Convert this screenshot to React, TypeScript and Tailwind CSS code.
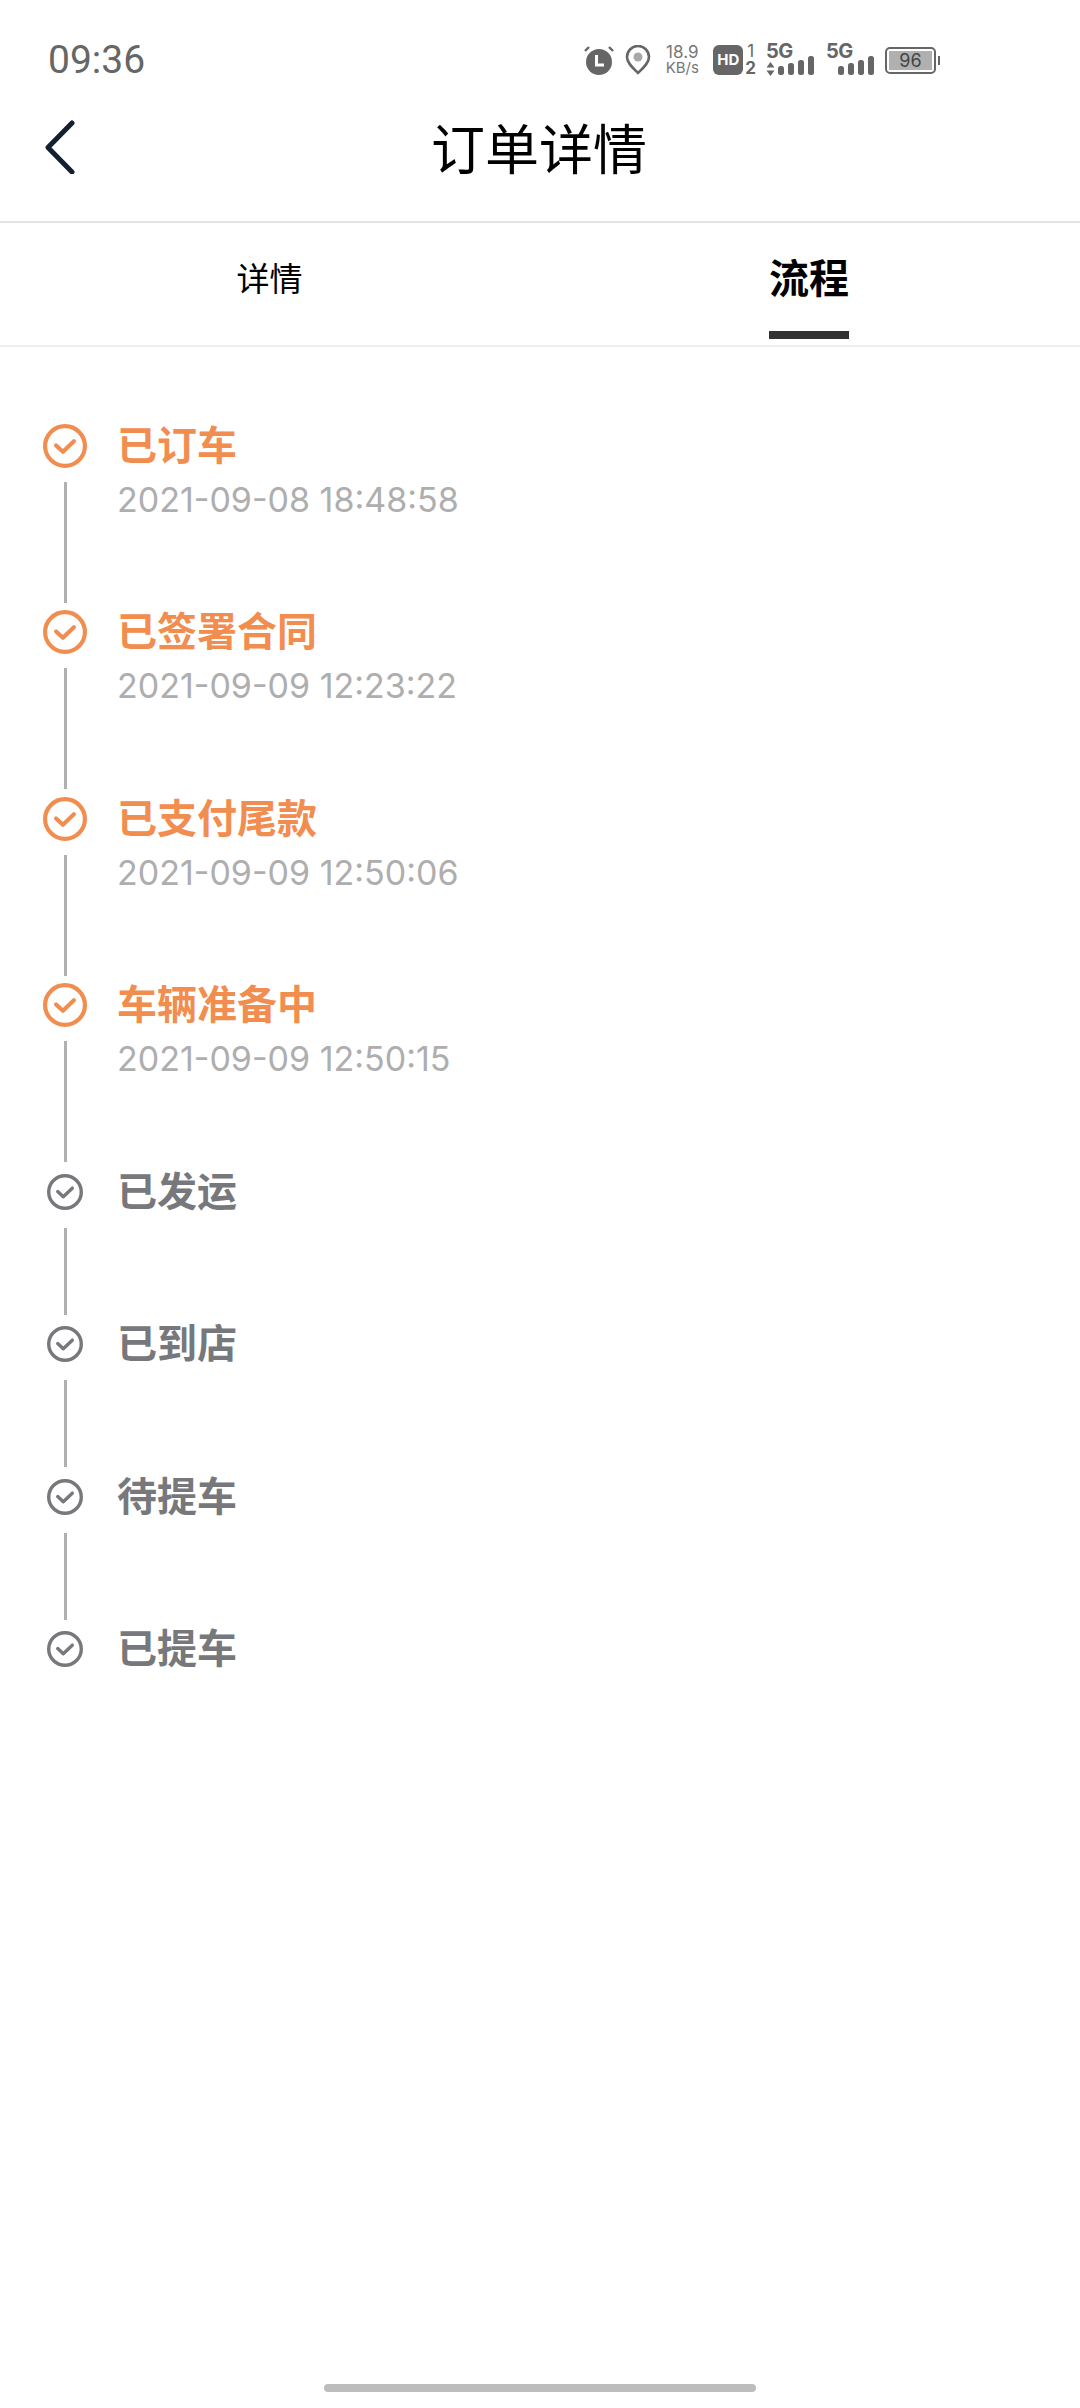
const doneSteps = [
  { title: "已订车", time: "2021-09-08 18:48:58" },
  { title: "已签署合同", time: "2021-09-09 12:23:22" },
  { title: "已支付尾款", time: "2021-09-09 12:50:06" },
  { title: "车辆准备中", time: "2021-09-09 12:50:15" },
]

const pendingSteps = ["已发运", "已到店", "待提车", "已提车"]

const CheckCircle = ({ size, color }: { size: number; color: string }) => (
  <svg width={size} height={size} viewBox="0 0 42 42" fill="none">
    <circle cx="21" cy="21" r="19" stroke={color} strokeWidth="4" />
    <path d="M12.5 20.5 L19 26.5 L29.5 16.5" stroke={color} strokeWidth="4" strokeLinecap="round" strokeLinejoin="round" />
  </svg>
)

const Signal = ({ arrows }: { arrows?: boolean }) => (
  <div className="relative h-[30px] w-[48px]">
    <span className="absolute left-0 top-[-4px] text-[20px] font-bold leading-[20px] tracking-[-0.5px] text-[#666]">5G</span>
    {arrows && (
      <svg className="absolute left-0 top-[17px]" width="9" height="14" viewBox="0 0 9 14" fill="#666">
        <path d="M4.5 0 L8.5 5.5 H0.5 Z M0.5 8.5 H8.5 L4.5 14 Z" />
      </svg>
    )}
    <svg className="absolute left-[12px] top-[11px]" width="36" height="19" viewBox="0 0 36 19" fill="#666">
      <rect x="0" y="10" width="6" height="9" rx="2.5" />
      <rect x="10" y="7" width="6" height="12" rx="2.5" />
      <rect x="20" y="4" width="6" height="15" rx="2.5" />
      <rect x="30" y="0" width="6" height="19" rx="2.5" />
    </svg>
  </div>
)

const StatusBar = () => (
  <div className="flex h-[88px] items-center justify-between pl-[48px] pr-[140px] pt-[32px] text-[#666]">
    <span className="text-[39px] leading-none" style={{ fontFamily: "Roboto, sans-serif" }}>09:36</span>
    <div className="flex items-center">
      <svg width="30" height="30" viewBox="0 0 30 30" fill="#666">
        <circle cx="15" cy="17" r="13" />
        <path d="M12.5 10 V20 H20" fill="none" stroke="#fff" strokeWidth="3" />
        <path d="M1 6 L5 2 M29 6 L25 2" stroke="#666" strokeWidth="2.4" fill="none" />
      </svg>
      <svg className="ml-[11px]" width="26" height="30" viewBox="0 0 26 30" fill="none">
        <path d="M13 28 C8 23 2 18 2 12 A11 11 0 0 1 24 12 C24 18 18 23 13 28 Z" stroke="#666" strokeWidth="2.6" strokeLinejoin="round" />
        <circle cx="13" cy="12" r="4.5" fill="#a8a8a8" />
      </svg>
      <div className="ml-[10px] flex w-[42px] flex-col items-center leading-[15px] text-[#777]">
        <span className="text-[17px]">18.9</span>
        <span className="text-[15px]">KB/s</span>
      </div>
      <div className="ml-[10px] flex h-[30px] w-[30px] items-center justify-center rounded-[6px] bg-[#666] text-[15px] font-bold text-white">
        HD
      </div>
      <div className="ml-[2px] flex flex-col items-center text-[17px] leading-[17px] font-bold text-[#666]">
        <span className="font-normal">1</span>
        <span>2</span>
      </div>
      <div className="ml-[10px]">
        <Signal arrows />
      </div>
      <div className="ml-[12px]">
        <Signal />
      </div>
      <div className="ml-[11px] flex items-center">
        <div className="flex h-[27px] w-[51px] items-center rounded-[5px] border-2 border-[#666] p-[2px]">
          <div className="flex h-full w-[44px] items-center justify-center bg-[#b0b0b0] text-[18px] text-[#444]">96</div>
        </div>
        <div className="ml-[2px] h-[9px] w-[2px] bg-[#666]" />
      </div>
    </div>
  </div>
)

export default function App() {
  return (
    <div
      className="h-[2408px] w-[1080px] overflow-hidden bg-white"
      style={{ fontFamily: '"Inter", "Noto Sans CJK SC", sans-serif' }}
    >
      <StatusBar />

      <div className="relative flex h-[135px] items-center justify-center border-b-2 border-[#e4e4e4] pb-[7px]">
        <svg className="absolute left-[44px] top-[30px]" width="32" height="56" viewBox="0 0 32 56" fill="none">
          <path d="M28 5 L4 29.5 L28 54" stroke="#13202f" strokeWidth="5" strokeLinecap="round" strokeLinejoin="round" />
        </svg>
        <span className="mr-[2px] text-[54px] leading-none text-black">订单详情</span>
      </div>

      <div className="grid h-[124px] grid-cols-2 border-b-2 border-[#eeeeee]">
        <div className="flex justify-center pt-[33px] pr-[1px]">
          <span className="text-[33px] leading-[46px] text-black">详情</span>
        </div>
        <div className="flex justify-center pr-[2px]">
          <div className="flex h-[116px] flex-col items-center justify-between pt-[33px]">
            <span className="text-[40px] leading-[46px] font-bold text-black">流程</span>
            <div className="h-[8px] w-[80px] bg-[#333]" />
          </div>
        </div>
      </div>

      <div className="pl-[43px] pt-[76.5px]">
        {doneSteps.map((step) => (
          <div key={step.title} className="flex h-[186.5px]">
            <div className="flex w-[44px] flex-col items-center">
              <CheckCircle size={44} color="#f28d50" />
              <div className="mt-[14px] h-[121px] w-[3px] bg-[#b0b0b0]" />
            </div>
            <div className="ml-[30px]">
              <div className="flex h-[44px] items-center text-[40px] font-bold text-[#f28d50]">{step.title}</div>
              <div className="mt-[10px] text-[34px] leading-[44px] text-[#aeaeae]">{step.time}</div>
            </div>
          </div>
        ))}
        {pendingSteps.map((title, i) => (
          <div key={title} className="flex h-[152.5px]">
            <div className="flex w-[44px] flex-col items-center">
              <div className="flex h-[44px] items-center">
                <CheckCircle size={36} color="#77787b" />
              </div>
              {i < pendingSteps.length - 1 && <div className="mt-[14px] h-[87px] w-[3px] bg-[#b0b0b0]" />}
            </div>
            <div className="ml-[30px] flex h-[44px] items-center text-[40px] font-bold text-[#77787b]">{title}</div>
          </div>
        ))}
      </div>

      <div className="fixed bottom-[16px] left-[324px] h-[8px] w-[432px] rounded-full bg-[#bdbdbd]" />
    </div>
  )
}
